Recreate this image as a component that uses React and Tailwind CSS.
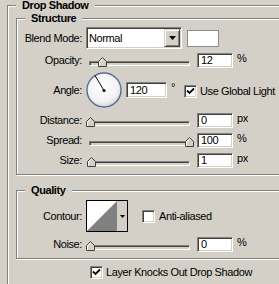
import React from 'react';

const sunken =
  'border border-t-[#808080] border-l-[#808080] border-b-white border-r-white shadow-[inset_1px_1px_0_#404040,inset_-1px_-1px_0_#d4d0c8]';
const etched = 'border border-[#808080] shadow-[inset_1px_1px_0_#fff,1px_1px_0_#fff]';

const GroupTitle = ({ children }) => (
  <div className="-mt-[7px] ml-[8px] w-fit bg-[#d4d0c8] px-[6px] font-bold leading-[13px]">
    {children}
  </div>
);

const Label = ({ children }) => (
  <div className="w-[65px] shrink-0 text-right leading-[13px]">{children}</div>
);

const NumInput = ({ value, w = 36, h = 15 }) => (
  <div
    className={`${sunken} bg-white pl-[3px] leading-[11px] flex items-center`}
    style={{ width: w, height: h }}
  >
    {value}
  </div>
);

const Thumb = () => (
  <svg width="9" height="10" viewBox="0 0 9 10">
    <polygon points="0.5,4.5 4.5,0.5 8.5,4.5 8.5,9.5 0.5,9.5" fill="#d4d0c8" stroke="#404040" />
    <polyline points="1.5,9 1.5,5 4.5,2" fill="none" stroke="#fff" />
  </svg>
);

const Slider = ({ value }) => (
  <div className="relative w-[108px] h-[15px] shrink-0">
    <div className={`${sunken} ml-[3px] mt-[8px] w-[101px] h-[5px] bg-[#d4d0c8]`} />
    <div className="absolute top-[4px]" style={{ left: Math.round(value * 0.99) }}>
      <Thumb />
    </div>
  </div>
);

const Check = ({ checked }) => (
  <div className={`${sunken} w-[13px] h-[13px] bg-white shrink-0 flex items-center justify-center`}>
    {checked && (
      <svg width="9" height="9" viewBox="0 0 9 9">
        <polyline points="1,3.5 3.5,6 8,1.5" fill="none" stroke="#000" strokeWidth="1.8" />
      </svg>
    )}
  </div>
);

const SliderRow = ({ label, value, unit }) => (
  <div className="flex items-center h-[15px]">
    <Label>{label}</Label>
    <div className="ml-[4px] flex items-center">
      <Slider value={value} />
      <div className="ml-[3px]">
        <NumInput value={value} />
      </div>
      <span className="ml-[4px] leading-[11px] -mt-[4px]">{unit}</span>
    </div>
  </div>
);

const Dial = () => (
  <svg width="36" height="36" viewBox="0 0 36 36">
    <defs>
      <radialGradient id="dialg" cx="45%" cy="40%" r="60%">
        <stop offset="0%" stopColor="#ffffff" />
        <stop offset="75%" stopColor="#f2f2f2" />
        <stop offset="100%" stopColor="#d8d8dc" />
      </radialGradient>
    </defs>
    <circle cx="18" cy="18" r="17" fill="url(#dialg)" stroke="#5a6c9c" strokeWidth="1.4" />
    <line x1="18" y1="18.5" x2="9" y2="3.5" stroke="#000" strokeWidth="1" />
    <circle cx="18" cy="18.5" r="1.6" fill="#000" />
  </svg>
);

export default function App() {
  return (
    <div className="w-[279px] h-[284px] overflow-hidden bg-[#d4d0c8] pt-[5px] pl-[7px] font-['Liberation_Sans',Arial,sans-serif] text-[11px] tracking-[-0.4px] text-black">
      <div className={`${etched} w-[320px] h-[300px]`}>
        <GroupTitle>Drop Shadow</GroupTitle>

        <div className={`${etched} ml-[8px] mt-[6px] w-[300px] pb-[6px]`}>
          <GroupTitle>Structure</GroupTitle>

          <div className="mt-[2px] flex items-center h-[22px]">
            <Label>Blend Mode:</Label>
            <div className={`${sunken} ml-[4px] w-[96px] h-[22px] bg-white flex`}>
              <div className="flex-1 pl-[2px] pt-[4px] leading-[13px]">Normal</div>
              <div className="my-[1px] mr-[1px] w-[16px] bg-[#d4d0c8] border border-t-[#d4d0c8] border-l-[#d4d0c8] border-b-[#404040] border-r-[#404040] shadow-[inset_1px_1px_0_#fff,inset_-1px_-1px_0_#808080] flex items-center justify-center">
                <svg width="7" height="4" viewBox="0 0 7 4">
                  <polygon points="0,0 7,0 3.5,4" fill="#000" />
                </svg>
              </div>
            </div>
            <div className="ml-[5px] w-[32px] h-[17px] bg-white border border-[#8c8c8c]" />
          </div>

          <div className="mt-[4px]">
            <SliderRow label="Opacity:" value={12} unit="%" />
          </div>

          <div className="mt-[4px] flex items-center h-[36px]">
            <Label>Angle:</Label>
            <div className="ml-[4px] flex items-center">
              <Dial />
              <div className="ml-[4px]">
                <NumInput value={120} w={41} h={16} />
              </div>
              <span className="ml-[4px] -mt-[6px] leading-[11px]">°</span>
              <div className="ml-[9px] mt-[2px] flex items-center">
                <Check checked />
                <span className="ml-[3px] leading-[13px]">Use Global Light</span>
              </div>
            </div>
          </div>

          <div className="mt-[5px]">
            <SliderRow label="Distance:" value={0} unit="px" />
          </div>
          <div className="mt-[5px]">
            <SliderRow label="Spread:" value={100} unit="%" />
          </div>
          <div className="mt-[5px]">
            <SliderRow label="Size:" value={1} unit="px" />
          </div>
        </div>

        <div className={`${etched} ml-[8px] mt-[15px] w-[300px] pb-[6px]`}>
          <GroupTitle>Quality</GroupTitle>

          <div className="mt-[3px] flex items-center h-[32px]">
            <Label>Contour:</Label>
            <div className="ml-[4px] w-[42px] h-[32px] border border-black flex">
              <svg width="30" height="30" viewBox="0 0 30 30" className="shrink-0">
                <rect width="30" height="30" fill="#fff" />
                <polygon points="0,30 30,0 30,30" fill="#808080" />
              </svg>
              <div className="flex-1 bg-[#d4d0c8] flex items-center justify-center">
                <svg width="5" height="3" viewBox="0 0 5 3">
                  <polygon points="0,0 5,0 2.5,3" fill="#000" />
                </svg>
              </div>
            </div>
            <div className="ml-[14px] flex items-center">
              <Check />
              <span className="ml-[4px] leading-[13px]">Anti-aliased</span>
            </div>
          </div>

          <div className="mt-[5px]">
            <SliderRow label="Noise:" value={0} unit="%" />
          </div>
        </div>

        <div className="mt-[7px] ml-[82px] flex items-center">
          <Check checked />
          <span className="ml-[3px] leading-[13px]">Layer Knocks Out Drop Shadow</span>
        </div>
      </div>
    </div>
  );
}
